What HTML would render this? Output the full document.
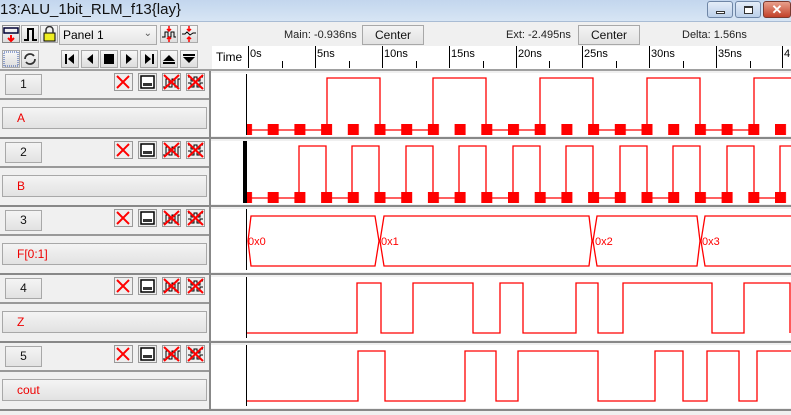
<!DOCTYPE html>
<html><head><meta charset="utf-8"><style>
*{margin:0;padding:0;box-sizing:border-box}
body{width:791px;height:415px;overflow:hidden;background:#f0f0f0;font-family:"Liberation Sans",sans-serif;position:relative}
.a{position:absolute}
.btn{position:absolute;background:linear-gradient(#f4f4f4,#e2e2e2);border:1px solid #a8a8a8;font-size:12px;color:#111;text-align:center}
.tb{position:absolute;width:18px;height:18px;border:1px solid #aaa;background:linear-gradient(#f8f8f8,#ddd)}
</style></head><body>
<div class="a" style="left:0;top:0;width:791px;height:22px;background:linear-gradient(#c3d6ee,#d7e5f4);border-bottom:1px solid #a9bcd4"></div>
<div class="a" style="left:0;top:1px;font-size:15px;color:#111">13:ALU_1bit_RLM_f13{lay}</div>
<div class="a" style="left:707px;top:1px;width:26px;height:17px;border:1px solid #6f86a6;border-radius:3px;background:linear-gradient(#e4edf8,#bcd0ea)"><div class="a" style="left:8px;top:9px;width:9px;height:3px;border:1px solid #333;background:#fff"></div></div>
<div class="a" style="left:735px;top:1px;width:26px;height:17px;border:1px solid #6f86a6;border-radius:3px;background:linear-gradient(#e4edf8,#bcd0ea)"><div class="a" style="left:8px;top:4px;width:9px;height:8px;border:1px solid #333;border-top-width:2px;background:#fff"></div></div>
<div class="a" style="left:763px;top:1px;width:28px;height:17px;border:1px solid #7a3a30;border-radius:3px;background:linear-gradient(#e8a08c,#c2412a);color:#fff;font-weight:bold;font-size:13px;text-align:center;line-height:15px">✕</div>

<div class="tb" style="left:2px;top:25px;border-color:#888"><svg width="16" height="16"><rect x="1" y="2" width="14" height="5" fill="none" stroke="#003" stroke-width="1.5"/><path d="M8 9v6M5 12l3 3 3-3" stroke="red" stroke-width="2" fill="none"/></svg></div>
<div class="tb" style="left:21px;top:25px"><svg width="16" height="16"><path d="M2 14h4V3h5v11h4" stroke="#000" stroke-width="2" fill="none"/></svg></div>
<div class="tb" style="left:40px;top:25px"><svg width="16" height="16"><rect x="3" y="7" width="11" height="8" fill="#ee2" stroke="#000"/><path d="M5 7V4a3 3 0 0 1 7 0v3" stroke="#333" fill="none" stroke-width="1.5"/></svg></div>
<div class="a" style="left:59px;top:25px;width:98px;height:20px;border:1px solid #aaa;background:linear-gradient(#f8f8f8,#e6e6e6);font-size:12px;padding:2px 3px">Panel 1<span style="position:absolute;right:4px;top:2px;color:#555;font-size:10px">⌄</span></div>
<div class="tb" style="left:160px;top:25px"><svg width="16" height="16"><path d="M1 11h3V6h3v5h3V6h3v5h2" stroke="#000" fill="none"/><path d="M8 0v5M6 3l2 2 2-2M8 16v-4M6 13l2-2 2 2" stroke="red" stroke-width="1.5" fill="none"/></svg></div>
<div class="tb" style="left:180px;top:25px"><svg width="16" height="16"><path d="M1 8h3l2-2 3 3 3-2h3" stroke="#000" fill="none"/><path d="M8 0v5M6 3l2 2 2-2M8 16v-4M6 13l2-2 2 2" stroke="red" stroke-width="1.5" fill="none"/></svg></div>
<div class="a" style="left:284px;top:29px;font-size:11px;color:#222">Main: -0.936ns</div>
<div class="btn" style="left:362px;top:25px;width:62px;height:20px;line-height:18px">Center</div>
<div class="a" style="left:506px;top:29px;font-size:11px;color:#222">Ext: -2.495ns</div>
<div class="btn" style="left:578px;top:25px;width:62px;height:20px;line-height:18px">Center</div>
<div class="a" style="left:682px;top:29px;font-size:11px;color:#222">Delta: 1.56ns</div>

<div class="tb" style="left:2px;top:50px"><svg width="16" height="16"><rect x="1" y="1" width="14" height="14" fill="none" stroke="#3355aa" stroke-dasharray="1 1"/></svg></div>
<div class="tb" style="left:21px;top:50px"><svg width="16" height="16"><path d="M3 8a5 5 0 0 1 9-3M13 8a5 5 0 0 1-9 3" stroke="#333" stroke-width="1.8" fill="none"/></svg></div>
<div class="tb" style="left:61px;top:50px"><svg width="16" height="16"><path d="M4 3v10" stroke="#000" stroke-width="2"/><path d="M12 3v10L6 8z" fill="#000"/></svg></div>
<div class="tb" style="left:81px;top:50px"><svg width="16" height="16"><path d="M11 3v10L5 8z" fill="#000"/></svg></div>
<div class="tb" style="left:100px;top:50px"><svg width="16" height="16"><rect x="3" y="3" width="10" height="10" fill="#000"/></svg></div>
<div class="tb" style="left:120px;top:50px"><svg width="16" height="16"><path d="M5 3v10l6-5z" fill="#000"/></svg></div>
<div class="tb" style="left:140px;top:50px"><svg width="16" height="16"><path d="M4 3v10l6-5z" fill="#000"/><path d="M12 3v10" stroke="#000" stroke-width="2"/></svg></div>
<div class="tb" style="left:160px;top:50px"><svg width="16" height="16"><path d="M2 10h12L8 4z" fill="#000"/><rect x="2" y="11" width="12" height="2" fill="#000"/></svg></div>
<div class="tb" style="left:180px;top:50px"><svg width="16" height="16"><path d="M2 6h12L8 12z" fill="#000"/><rect x="2" y="3" width="12" height="2" fill="#000"/></svg></div>

<div class="a" style="left:212px;top:46px;width:579px;height:23px;background:#fff"></div>
<div class="a" style="left:216px;top:50px;font-size:12px">Time</div>
<div class="a" style="left:0;top:69px;width:791px;height:2px;background:#a0a0a0"></div>

<svg class="a" style="left:0;top:0" width="791" height="415">
<g stroke="#000" stroke-width="1">
<path d="M248.5 46V68M315.5 46V68M382.5 46V68M449.5 46V68M516.5 46V68M582.5 46V68M649.5 46V68M716.5 46V68M782.5 46V68"/>
<path d="M282.5 61V68M349.5 61V68M416.5 61V68M483.5 61V68M549.5 61V68M616.5 61V68M683.5 61V68M750.5 61V68"/>
</g>
<g font-family="Liberation Sans,sans-serif" font-size="11" fill="#000">
<text x="250" y="57">0s</text><text x="317" y="57">5ns</text><text x="384" y="57">10ns</text><text x="451" y="57">15ns</text><text x="518" y="57">20ns</text><text x="584" y="57">25ns</text><text x="651" y="57">30ns</text><text x="718" y="57">35ns</text><text x="784" y="57">4</text>
</g>
</svg>

<div class="a" style="left:209px;top:71px;width:2px;height:339px;background:#888"></div>
<div class="a" style="left:211px;top:73px;width:580px;height:63px;background:#fff"></div>
<div class="a" style="left:211px;top:141px;width:580px;height:63px;background:#fff"></div>
<div class="a" style="left:211px;top:209px;width:580px;height:63px;background:#fff"></div>
<div class="a" style="left:211px;top:277px;width:580px;height:63px;background:#fff"></div>
<div class="a" style="left:211px;top:345px;width:580px;height:63px;background:#fff"></div>
<div class="a" style="left:0;top:137px;width:791px;height:2px;background:#888"></div>
<div class="a" style="left:0;top:205px;width:791px;height:2px;background:#888"></div>
<div class="a" style="left:0;top:273px;width:791px;height:2px;background:#888"></div>
<div class="a" style="left:0;top:341px;width:791px;height:2px;background:#888"></div>
<div class="a" style="left:0;top:409px;width:791px;height:2px;background:#888"></div>

<div style="position:absolute;left:0;top:70px">
 <div class="btn" style="left:5px;top:4px;width:37px;height:21px;line-height:19px">1</div>
 <div class="a" style="left:0;top:28px;width:209px;height:2px;background:#999"></div>
 <div class="btn" style="left:2px;top:37px;width:205px;height:22px;line-height:20px;text-align:left;padding-left:14px;color:#e00">A</div>
</div>
<div style="position:absolute;left:0;top:138px">
 <div class="btn" style="left:5px;top:4px;width:37px;height:21px;line-height:19px">2</div>
 <div class="a" style="left:0;top:28px;width:209px;height:2px;background:#999"></div>
 <div class="btn" style="left:2px;top:37px;width:205px;height:22px;line-height:20px;text-align:left;padding-left:14px;color:#e00">B</div>
</div>
<div style="position:absolute;left:0;top:206px">
 <div class="btn" style="left:5px;top:4px;width:37px;height:21px;line-height:19px">3</div>
 <div class="a" style="left:0;top:28px;width:209px;height:2px;background:#999"></div>
 <div class="btn" style="left:2px;top:37px;width:205px;height:22px;line-height:20px;text-align:left;padding-left:14px;color:#e00">F[0:1]</div>
</div>
<div style="position:absolute;left:0;top:274px">
 <div class="btn" style="left:5px;top:4px;width:37px;height:21px;line-height:19px">4</div>
 <div class="a" style="left:0;top:28px;width:209px;height:2px;background:#999"></div>
 <div class="btn" style="left:2px;top:37px;width:205px;height:22px;line-height:20px;text-align:left;padding-left:14px;color:#e00">Z</div>
</div>
<div style="position:absolute;left:0;top:342px">
 <div class="btn" style="left:5px;top:4px;width:37px;height:21px;line-height:19px">5</div>
 <div class="a" style="left:0;top:28px;width:209px;height:2px;background:#999"></div>
 <div class="btn" style="left:2px;top:37px;width:205px;height:22px;line-height:20px;text-align:left;padding-left:14px;color:#e00">cout</div>
</div>

<svg class="a" style="left:0;top:0" width="791" height="415">
<defs>
<pattern id="sq" x="241" y="0" width="26.7" height="415" patternUnits="userSpaceOnUse"><rect x="0" y="0" width="11" height="415" fill="red"/></pattern>
<g id="icons">
<rect x="114.5" y="0.5" width="18" height="17" fill="#eee" stroke="#999"/>
<path d="M117 3l12 12M129 3l-12 12" stroke="red" stroke-width="2"/>
<rect x="138.5" y="0.5" width="18" height="17" fill="#eee" stroke="#999"/>
<rect x="141" y="3" width="13" height="12" fill="#fff" stroke="#000" stroke-width="1.5"/><rect x="143" y="10" width="9" height="3" fill="#333"/>
<rect x="162.5" y="0.5" width="18" height="17" fill="#eee" stroke="#999"/>
<path d="M163 14h3V6h3v8h3V6h3v8h3V6h2" stroke="#000" fill="none"/><path d="M164 2l15 14M179 2l-15 14" stroke="red" stroke-width="2"/>
<rect x="186.5" y="0.5" width="18" height="17" fill="#eee" stroke="#999"/>
<path d="M188 4h3v4h3V4h3v4h3V4h3M188 10h3v4h3v-4h3v4h3v-4h3" stroke="#000" fill="none"/><path d="M188 2l15 14M203 2l-15 14" stroke="red" stroke-width="2"/>
</g>
</defs>
<use href="#icons" x="0" y="73"/>
<use href="#icons" x="0" y="141"/>
<use href="#icons" x="0" y="209"/>
<use href="#icons" x="0" y="277"/>
<use href="#icons" x="0" y="345"/>

<g stroke="#000"><path d="M246.5 74V135M246.5 277V338M246.5 345V406M246.5 209V270"/></g>
<rect x="243" y="141" width="4" height="62" fill="#000"/>

<g stroke="red" stroke-width="1.3" fill="none">
<path d="M247 130H327V78H380V130H433V78H486V130H540V78H593V130H647V78H700V130H754V78H791"/>
<path d="M247 198H299V146H326V198H352V146H379V198H406V146H433V198H459V146H486V198H513V146H540V198H566V146H593V198H620V146H647V198H673V146H700V198H727V146H754V198H780V146H791"/>
<path d="M248 241L251 216H375L379 241L375 266H251Z"/>
<path d="M380 241L384 216H589L592 241L589 266H384Z"/>
<path d="M593 241L597 216H697L700 241L697 266H597Z"/>
<path d="M792 216H705L701 241L705 266H792"/>
<path d="M247 333H357V283H381V333H413V283H473V333H500V283H523V333H576V283H598V333H623V283H712V333H744V283H790V333"/>
<path d="M247 401H358V351H385V401H465V351H496V401H518V351H598V401H655V351H683V401H707V351H739V401H757V351H791"/>
</g>
<rect x="247" y="124" width="544" height="11" fill="url(#sq)"/>
<rect x="247" y="192" width="544" height="11" fill="url(#sq)"/>
<g font-family="Liberation Sans,sans-serif" font-size="11" fill="red">
<text x="248" y="245">0x0</text><text x="381" y="245">0x1</text><text x="595" y="245">0x2</text><text x="702" y="245">0x3</text>
</g>
</svg>
</body></html>
